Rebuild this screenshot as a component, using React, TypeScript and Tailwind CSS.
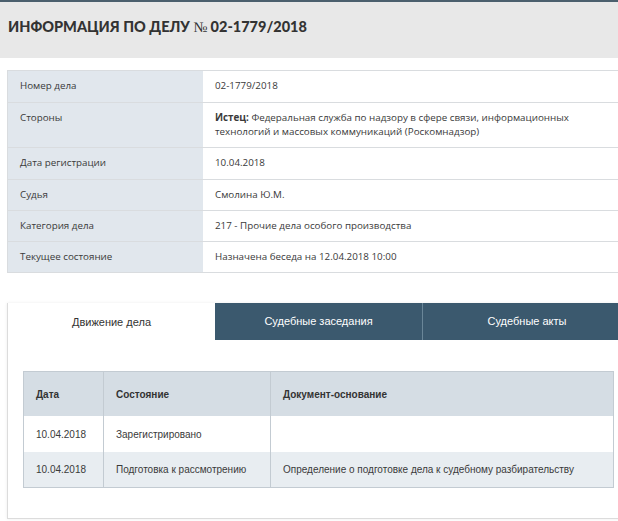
import React from "react";

const infoRows: { label: string; value: React.ReactNode; h: string }[] = [
  { label: "Номер дела", value: "02-1779/2018", h: "h-[31px]" },
  {
    label: "Стороны",
    value: (
      <>
        <b className="font-bold">Истец:</b> Федеральная служба по надзору в сфере связи, информационных технологий и
        массовых коммуникаций (Роскомнадзор)
      </>
    ),
    h: "h-[45px]",
  },
  { label: "Дата регистрации", value: "10.04.2018", h: "h-[32px]" },
  { label: "Судья", value: "Смолина Ю.М.", h: "h-[31px]" },
  { label: "Категория дела", value: "217 - Прочие дела особого производства", h: "h-[31px]" },
  { label: "Текущее состояние", value: "Назначена беседа на 12.04.2018 10:00", h: "h-[31px]" },
];

export default function App() {
  return (
    <div className="w-[618px] h-[521px] overflow-hidden bg-white relative">
      {/* Header */}
      <div className="border-t-2 border-[#4b5f6d] bg-[#e8e8e8] h-[58px] pl-[8px] pt-[15px]">
        <h1
          className="text-[14.5px] leading-[20px] font-black text-[#333] uppercase whitespace-nowrap"
          style={{ fontFamily: "Lato, 'Open Sans', sans-serif" }}
        >
          Информация по делу{" "}
          <span className="font-normal" style={{ fontFamily: "'Liberation Serif', serif" }}>
            №
          </span>{" "}
          02-1779/2018
        </h1>
      </div>

      {/* Info table */}
      <div
        className="mt-[12px] ml-[7px] w-[625px] border border-[#d9dcdf] text-[9.8px] leading-[14px] text-[#3a3a3a]"
        style={{ fontFamily: "'Open Sans', sans-serif" }}
      >
        {infoRows.map((r, i) => (
          <div key={i} className={`flex ${r.h} ${i > 0 ? "border-t border-[#d9dcdf]" : ""}`}>
            <div className="w-[195px] shrink-0 bg-[#e1e7ed] pl-[12px] pt-[8px]">{r.label}</div>
            <div className="flex-1 pl-[12px] pr-[12px] pt-[8px]">{r.value}</div>
          </div>
        ))}
      </div>

      {/* Tabs container */}
      <div
        className="mt-[30px] ml-[7px] w-[625px] h-[216px] border border-[#dcdcdc] shadow-[0_0_3px_rgba(0,0,0,0.08)]"
        style={{ fontFamily: "'Liberation Sans', Arial, sans-serif" }}
      >
        <div className="flex h-[37px] text-[11px] -mt-px">
          <div className="w-[207px] flex items-center justify-center bg-white text-[#333] pt-px">Движение дела</div>
          <div className="w-[207px] flex items-center justify-center bg-[#3b596e] text-white">Судебные заседания</div>
          <div className="flex-1 flex items-center justify-center bg-[#3b596e] text-white border-l border-[#6a8698]">
            Судебные акты
          </div>
        </div>

        <div className="mt-[31px] ml-[15px] w-[591px] border border-[#c3cbd2] text-[10px] text-[#3a3a3a]">
          <div className="flex h-[44px] bg-[#d5dde4] font-semibold text-[#333]">
            <div className="w-[80px] shrink-0 flex items-center pl-[12px] border-r border-[#c3cbd2]">Дата</div>
            <div className="w-[167px] shrink-0 flex items-center pl-[12px] border-r border-[#c3cbd2]">Состояние</div>
            <div className="flex-1 flex items-center pl-[12px]">Документ-основание</div>
          </div>
          <div className="flex h-[36px] bg-white">
            <div className="w-[80px] shrink-0 flex items-center pl-[12px] border-r border-[#c3cbd2]">10.04.2018</div>
            <div className="w-[167px] shrink-0 flex items-center pl-[12px] border-r border-[#c3cbd2]">Зарегистрировано</div>
            <div className="flex-1 flex items-center pl-[12px]"></div>
          </div>
          <div className="flex h-[35px] bg-[#e8edf1]">
            <div className="w-[80px] shrink-0 flex items-center pl-[12px] border-r border-[#c3cbd2]">10.04.2018</div>
            <div className="w-[167px] shrink-0 flex items-center pl-[12px] border-r border-[#c3cbd2]">
              Подготовка к рассмотрению
            </div>
            <div className="flex-1 flex items-center pl-[12px]">
              Определение о подготовке дела к судебному разбирательству
            </div>
          </div>
        </div>
      </div>
    </div>
  );
}
